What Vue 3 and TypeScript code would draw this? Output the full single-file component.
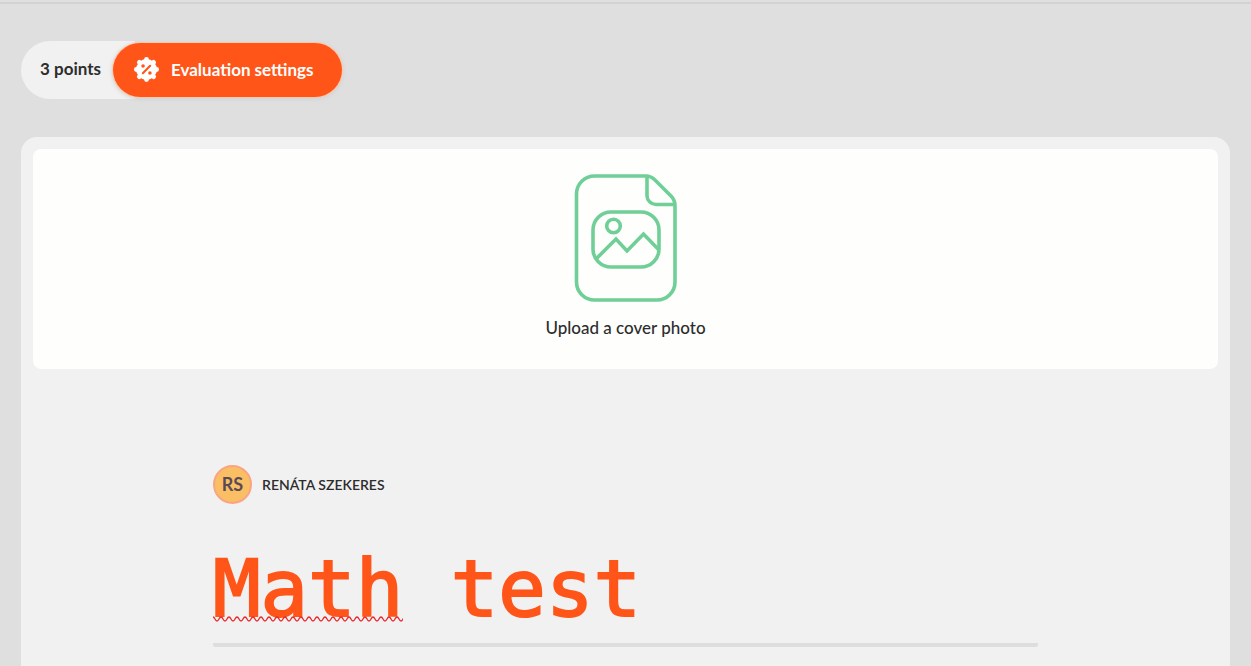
<script setup lang="ts">
import { ref } from 'vue'

const title = ref('Math test')
const points = ref(3)
const author = { name: 'Renáta Szekeres', initials: 'RS' }

const toothAngles = Array.from({ length: 8 }, (_, i) => i * 45)
const squiggle =
  'M0 1' + Array.from({ length: 24 }, () => 'q1 0 2 2t2 2t2 -2t2 -2').join('')
</script>

<template>
  <div class="page">
    <div class="topline"></div>
    <header class="toolbar">
      <span class="points">{{ points }} points</span>
      <button type="button" class="settings">
        <svg class="badge" viewBox="0 0 24 24" aria-hidden="true">
          <g fill="#fff">
            <circle cx="12" cy="12" r="10" />
            <circle
              v-for="a in toothAngles"
              :key="a"
              cx="12"
              cy="2.3"
              r="2.3"
              :transform="`rotate(${a} 12 12)`"
            />
          </g>
          <path d="M8.5 15.5L15.5 8.5" stroke="#ff5519" stroke-width="2" stroke-linecap="round" />
          <circle cx="8.7" cy="8.700" r="1.700" fill="#ff5519" />
          <circle cx="15.3" cy="15.300" r="1.700" fill="#ff5519" />
        </svg>
        <span>Evaluation settings</span>
      </button>
    </header>

    <main class="card">
      <button type="button" class="cover">
        <svg class="file" viewBox="0 0 104 130" aria-hidden="true">
          <g fill="none" stroke="#6fcf97" stroke-width="3.6">
            <path d="M72 2H20.500A18 18 0 0 0 2.500 20V108A18 18 0 0 0 20.500 126H83A18 18 0 0 0 101 108V32Q101 26 97 22L81 6Q77 2 72 2Z" />
            <path d="M73 2V22A9 9 0 0 0 82 30.500H101" />
            <rect x="19" y="38" width="66" height="55" rx="18" />
            <circle cx="39.500" cy="52" r="6.800" />
            <path d="M22 85L42 65L53 77L69.500 60L85 76" />
          </g>
        </svg>
        <span>Upload a cover photo</span>
      </button>

      <section class="content">
        <div class="author">
          <span class="avatar">{{ author.initials }}</span>
          <span class="name">{{ author.name }}</span>
        </div>
        <div class="title-field">
          <input v-model="title" class="title" type="text" aria-label="Test title" spellcheck="false" />
          <svg class="spelling" viewBox="0 0 190 6" aria-hidden="true">
            <path :d="squiggle" fill="none" stroke="#e8292c" stroke-width="1.300" />
          </svg>
        </div>
      </section>
    </main>
  </div>
</template>

<style>
body {
  margin: 0;
  background: #dfdfdf;
}
</style>

<style scoped>
.page {
  box-sizing: border-box;
  display: flex;
  flex-direction: column;
  min-height: 100vh;
  background: #dfdfdf;
  color: #2d2d2d;
  font-family: Lato, 'Liberation Sans', sans-serif;
}
.topline {
  height: 2px;
  border-bottom: 2px solid #d2d2d2;
}
.toolbar {
  display: flex;
  align-items: center;
  padding: 37px 21px 38px;
}
.points {
  box-sizing: border-box;
  height: 58px;
  padding: 0 34px 0 19px;
  border-radius: 29px 0 0 29px;
  background: #f1f1f1;
  font-size: 17px;
  font-weight: 700;
  line-height: 56px;
  white-space: nowrap;
}
.settings {
  display: flex;
  align-items: center;
  gap: 12px;
  height: 54px;
  margin: 0 0 0 -22px;
  padding: 0 28px 2px 21px;
  border: 0;
  border-radius: 27px;
  background: #ff5519;
  box-shadow: 0 0 0 1px #ffc9ac, 0 1px 4px 1px #d0d0d0;
  color: #fff;
  font: inherit;
  font-size: 17px;
  font-weight: 700;
  white-space: nowrap;
  cursor: pointer;
}
.badge {
  width: 25px;
  height: 25px;
}
.card {
  flex: 1;
  margin: 0 21px;
  padding: 12px 12px 0;
  border-radius: 16px 16px 0 0;
  background: #f1f1f1;
}
.cover {
  box-sizing: border-box;
  display: flex;
  flex-direction: column;
  align-items: center;
  gap: 11px;
  width: 100%;
  padding: 25px 16px 29px;
  border: 0;
  border-radius: 8px;
  background: #fefefd;
  color: inherit;
  font: inherit;
  font-size: 17px;
  font-weight: 500;
  line-height: 25px;
  cursor: pointer;
}
.file {
  width: 104px;
  height: 130px;
}
.content {
  padding: 96px 180px 0;
}
.author {
  display: flex;
  align-items: center;
  gap: 10px;
}
.avatar {
  box-sizing: border-box;
  width: 39px;
  height: 39px;
  border: 2px solid #faa582;
  border-radius: 50%;
  background: #fabe64;
  color: #5a4a55;
  font-size: 18px;
  font-weight: 700;
  line-height: 35px;
  text-align: center;
}
.name {
  font-size: 14px;
  font-weight: 600;
  text-transform: uppercase;
}
.title-field {
  position: relative;
  margin-top: 34px;
}
.title {
  box-sizing: border-box;
  display: block;
  width: 100%;
  height: 109px;
  padding: 0 0 4px;
  border: 0;
  border-bottom: 4px solid #dedede;
  border-radius: 2px;
  background: transparent;
  color: #ff5519;
  font-family: 'DejaVu Sans Mono', 'Liberation Mono', monospace;
  font-size: 79px;
  -webkit-text-stroke: 2px #ff5519;
  outline: none;
}
.spelling {
  position: absolute;
  left: 0;
  bottom: 25px;
  width: 190px;
  height: 6px;
  pointer-events: none;
}
</style>
